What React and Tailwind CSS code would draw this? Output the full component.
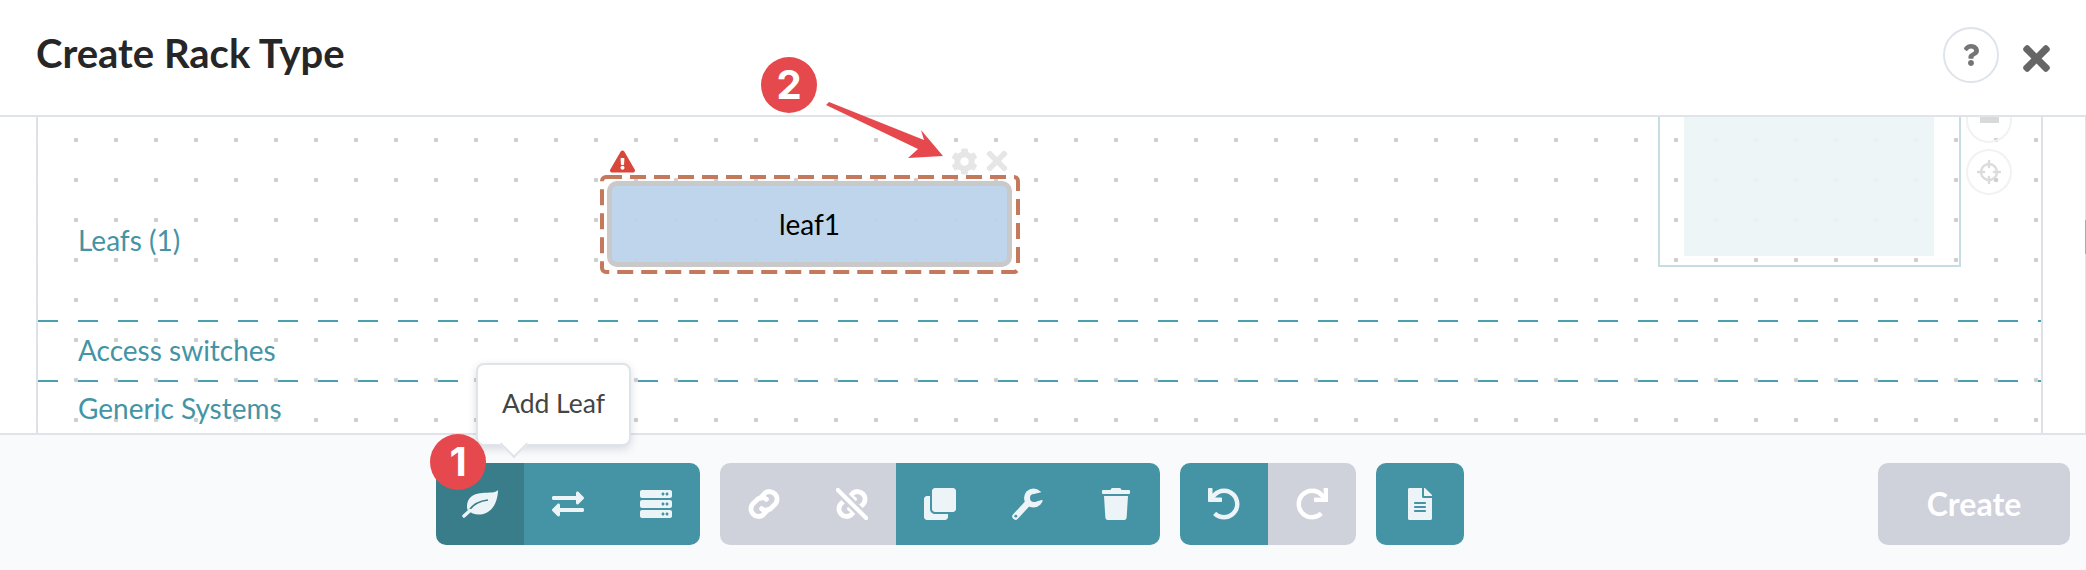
import React from 'react';
import { FaExchangeAlt, FaServer, FaClone, FaTrash, FaUndo, FaRedo, FaFileAlt, FaCog, FaTimes, FaQuestion, FaExclamationTriangle } from 'react-icons/fa';

const Btn = ({ children, kind = 'teal' }) => (
  <div className={
    'w-[88px] h-[82px] flex items-center justify-center ' +
    (kind === 'teal' ? 'bg-[#4494a5] text-[#ecf4f7]' : kind === 'dark' ? 'bg-[#3a7d8a] text-[#ecf4f7]' : 'bg-[#cfd1db] text-white')
  }>
    {children}
  </div>
);

const Group = ({ children }) => <div className="flex rounded-[10px] overflow-hidden">{children}</div>;

const Divider = () => (
  <div className="h-[2px] bg-[repeating-linear-gradient(90deg,#4a9fb0_0_20px,transparent_20px_40px)]" />
);

const Leaf = () => (
  <svg width="36" height="28" viewBox="0 0 36 28">
    <path d="M36 0 C33 3 28 2.5 20 3 C10 3.5 5 9 5 16 C5 19 5.5 20 6.5 21 C10 24 17 26 24 23 C33 19 36 8 36 0Z" fill="currentColor" />
    <path d="M6 22 C10 15 16 11 26 10" fill="none" stroke="#3a7d8a" strokeWidth="1.6" />
    <path d="M2 26 L8 20.5" fill="none" stroke="currentColor" strokeWidth="3.4" strokeLinecap="round" />
  </svg>
);

const linkA = 'M13 11 L17 6.5 A6.5 6.5 0 0 1 26 15.5 L21.5 20 A6 6 0 0 1 14 20';
const linkB = 'M19 21 L15 25.5 A6.5 6.5 0 0 1 6 16.5 L10.5 12 A6 6 0 0 1 18 12';

const Link = () => (
  <svg width="32" height="32" viewBox="2.4 2.4 27.2 27.2" fill="none" stroke="currentColor" strokeWidth="4.2" strokeLinecap="round">
    <path d={linkA} />
    <path d={linkB} />
  </svg>
);

const Unlink = () => (
  <svg width="32" height="32" viewBox="2.4 2.4 27.2 27.2" fill="none" strokeLinecap="round">
    <path d={linkA} stroke="currentColor" strokeWidth="4.2" />
    <path d={linkB} stroke="currentColor" strokeWidth="4.2" />
    <line x1="2" y1="2" x2="30" y2="30" stroke="#cfd1db" strokeWidth="8" strokeLinecap="butt" />
    <line x1="4" y1="4" x2="28" y2="28" stroke="currentColor" strokeWidth="3.6" />
  </svg>
);

const Wrench = () => (
  <svg width="32" height="32" viewBox="0 0 32 32">
    <line x1="3.5" y1="28.5" x2="17" y2="14" stroke="currentColor" strokeWidth="6.4" strokeLinecap="round" />
    <circle cx="21.5" cy="10" r="9.5" fill="currentColor" />
    <circle cx="22" cy="10" r="4" fill="#4494a5" />
    <path d="M22 6 L32 3.5 L32 11.5 L22 14Z" fill="#4494a5" />
    <circle cx="3.8" cy="28.2" r="1.4" fill="#4494a5" />
  </svg>
);

const Crosshair = () => (
  <svg width="24" height="24" viewBox="0 0 24 24" fill="none" stroke="#dcdcdc">
    <circle cx="12" cy="12" r="8" strokeWidth="2.4" />
    <path d="M12 1v6M12 17v6M1 12h6M17 12h6" strokeWidth="2.6" strokeLinecap="round" />
  </svg>
);

export default function App() {
  return (
    <div className="relative w-full h-[570px] overflow-hidden flex flex-col bg-white font-['Lato',sans-serif]">
      <header className="h-[117px] shrink-0 border-b-2 border-[#dfe4ea] flex items-center pl-[36px] pr-[30px] pb-[3px]">
        <h1 className="text-[40px] leading-[48px] font-bold text-[#262626] pb-[6px]">Create Rack Type</h1>
        <div className="ml-auto flex items-center gap-[18px] pb-[2px]">
          <div className="w-[56px] h-[56px] rounded-full border-2 border-[#dfe3ea] flex items-center justify-center text-[#757575]">
            <FaQuestion size={22} />
          </div>
          <FaTimes size={39} className="text-[#666666] mt-[6px]" />
        </div>
      </header>

      <main className="flex-1 min-h-0 flex pl-[36px] pr-0">
        <div className="relative flex-1 border-x-2 border-[#dfe1e8] mr-[42px] flex flex-col overflow-hidden bg-[radial-gradient(circle,#cfcfcf_2px,transparent_2.6px)] bg-size-[40px_40px] bg-position-[18px_3px]">
          <div className="h-[203px] pt-[43px] pl-[40px] flex items-center">
            <span className="text-[28px] text-[#4494a5]">Leafs (1)</span>
          </div>
          <Divider />
          <div className="h-[58px] pl-[40px] flex items-center pb-[2px]">
            <span className="text-[28px] text-[#4494a5]">Access switches</span>
          </div>
          <Divider />
          <div className="flex-1 pl-[40px] flex items-center">
            <span className="text-[28px] text-[#4494a5]">Generic Systems</span>
          </div>

          {/* leaf node */}
          <svg className="absolute left-[562px] top-[58px]" width="420" height="99" viewBox="0 0 420 99" fill="none">
            <rect x="2" y="2" width="416" height="95" rx="4" stroke="#c4785c" strokeWidth="4" strokeDasharray="16 8" />
          </svg>
          <div className="absolute left-[569px] top-[64px] w-[405px] h-[86px] rounded-[10px] border-[5px] border-[#c9c9c9] bg-[#bcd3ea]/95 flex items-center justify-center">
            <span className="text-[28px] text-black">leaf1</span>
          </div>
          <FaExclamationTriangle size={25} className="absolute left-[572px] top-[32px] text-[#d8483a]" />
          <FaCog size={27} className="absolute left-[913px] top-[31px] text-[#e6e6e6]" />
          <FaTimes size={30} className="absolute left-[944px] top-[29px] text-[#e6e6e6]" />

          {/* minimap */}
          <div className="absolute left-[1620px] top-0 w-[303px] h-[150px] border-2 border-t-0 border-[#c5dde3]">
            <div className="ml-[24px] w-[250px] h-[139px] bg-[#ecf4f6]/90" />
          </div>
          {/* zoom controls */}
          <div className="absolute left-[1928px] top-[-20px] w-[46px] h-[46px] rounded-full border-2 border-[#f2f2f2] flex items-center justify-center">
            <div className="w-[19px] h-[6px] bg-[#d9d9d9] mt-[-1px]" />
          </div>
          <div className="absolute left-[1928px] top-[32px] w-[46px] h-[46px] rounded-full border-2 border-[#f2f2f2] flex items-center justify-center">
            <Crosshair />
          </div>
        </div>
        <div className="w-[1px] bg-[#e2e2e2] relative">
          <div className="absolute left-0 top-[103px] w-[1px] h-[34px] bg-[#aaaaaa]" />
        </div>
      </main>

      <footer className="h-[137px] shrink-0 border-t-2 border-[#e0e3ea] bg-[#f9fafc] pt-[28px] pl-[436px] pr-[16px] flex items-start gap-[20px]">
        <Group>
          <Btn kind="dark"><Leaf /></Btn>
          <Btn><FaExchangeAlt size={32} /></Btn>
          <Btn><FaServer size={32} /></Btn>
        </Group>
        <Group>
          <Btn kind="gray"><Link /></Btn>
          <Btn kind="gray"><Unlink /></Btn>
          <Btn><FaClone size={32} /></Btn>
          <Btn><Wrench /></Btn>
          <Btn><FaTrash size={32} /></Btn>
        </Group>
        <Group>
          <Btn><FaUndo size={32} /></Btn>
          <Btn kind="gray"><FaRedo size={32} /></Btn>
        </Group>
        <Group>
          <Btn><FaFileAlt size={32} /></Btn>
        </Group>
        <button className="ml-auto w-[192px] h-[82px] rounded-[10px] bg-[#cfd1db] text-white font-bold text-[32px]">Create</button>
      </footer>

      {/* tooltip */}
      <div className="absolute left-[476px] top-[363px] w-[155px] h-[83px] rounded-[8px] bg-white border-2 border-[#dfe3ea] shadow-[0_3px_8px_rgba(60,70,100,0.18)] flex items-center justify-center">
        <span className="text-[26.5px] text-[#444444] pb-[1px]">Add Leaf</span>
        <div className="absolute left-[26px] top-[69px] w-[20px] h-[20px] rotate-45 bg-white border-r-2 border-b-2 border-[#dfe3ea]" />
      </div>

      {/* callouts */}
      <div className="absolute left-[430px] top-[434px] w-[56px] h-[56px] rounded-full bg-[#e5494d] flex items-center justify-center font-['Inter',sans-serif] font-bold text-[40px] text-white">1</div>
      <div className="absolute left-[761px] top-[57px] w-[56px] h-[56px] rounded-full bg-[#e5494d] flex items-center justify-center font-['Inter',sans-serif] font-bold text-[40px] text-white">2</div>
      <svg className="absolute left-[820px] top-[100px]" width="130" height="65" viewBox="0 0 130 65">
        <polygon points="6,5 9,2 104,40 101,30 123,56 88,58 98,49" fill="#e5494d" />
      </svg>
    </div>
  );
}
